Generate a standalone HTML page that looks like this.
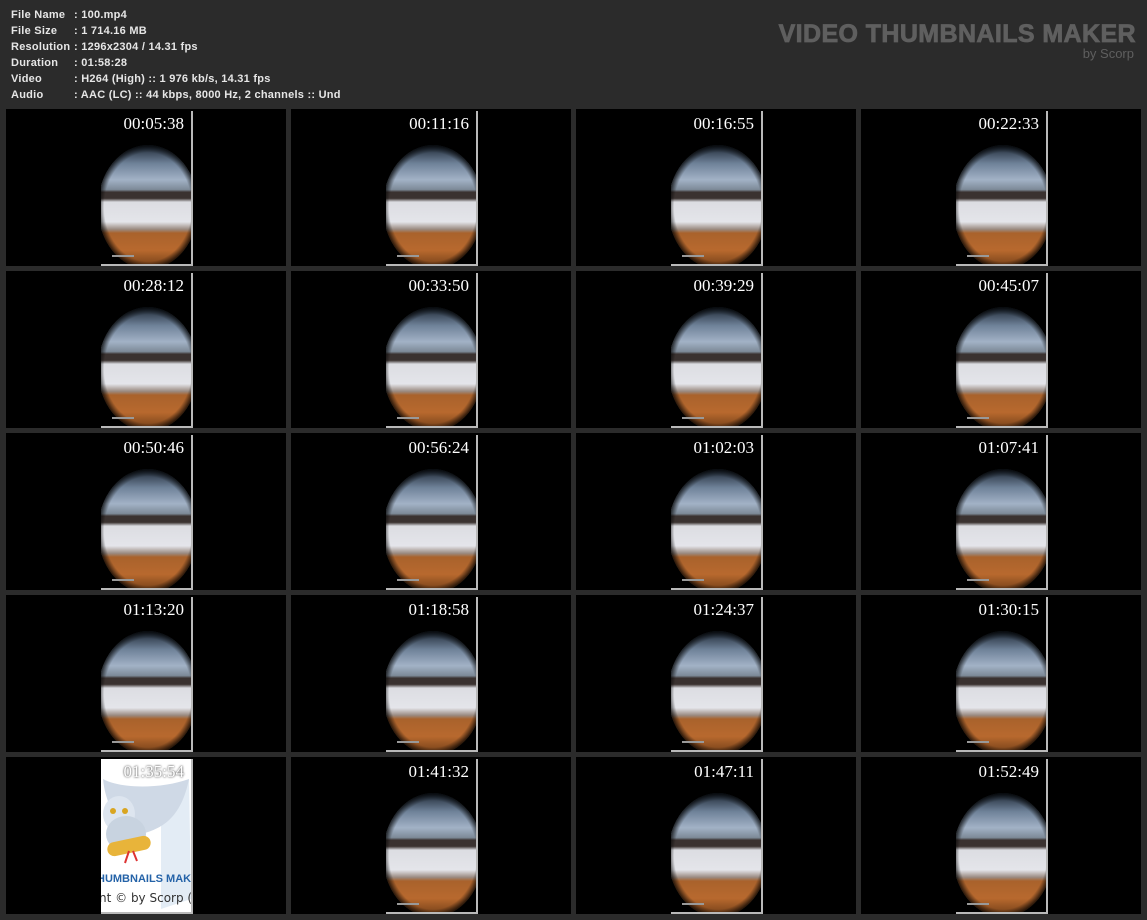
<!DOCTYPE html>
<html><head><meta charset="utf-8"><style>
*{margin:0;padding:0;box-sizing:border-box}
body{width:1147px;height:920px;background:#2b2b2b;position:relative;overflow:hidden;font-family:"Liberation Sans",Arial,sans-serif}
.info{position:absolute;left:11px;top:7px;color:#e6e6e6;font-size:11px;font-weight:bold;line-height:16px;letter-spacing:0.25px}
.info div{white-space:nowrap}
.info span{display:inline-block;width:63px}
.logo{position:absolute;right:11px;top:19px;color:#5f5f5f;font-family:"Liberation Sans",sans-serif;font-weight:bold;font-size:25px;letter-spacing:0.4px;line-height:30px;-webkit-text-stroke:0.8px #5f5f5f}
.by{position:absolute;right:13px;top:46px;color:#5f5f5f;font-family:"Liberation Sans",sans-serif;font-size:13px}
.cell{position:absolute;width:280px;height:157px;background:#000}
.th{position:absolute;left:95px;top:2px;width:92px;height:155px;background:#000;border-right:2px solid #b9b9b9;border-bottom:2px solid #b9b9b9;overflow:hidden}
.sc{position:absolute;left:-3px;top:34px;width:100px;height:124px;border-radius:50%;overflow:hidden;background:linear-gradient(#1a2430 0%,#6f8299 15%,#a2b2c6 28%,#7d8a98 36%,#3a3230 38%,#3a3230 43%,#dcdde2 46%,#e4e5ea 62%,#9a8a80 68%,#a9622c 71%,#b8692e 85%,#6a3a16 100%)}
.vg{position:absolute;left:-3px;top:34px;width:100px;height:124px;border-radius:50%;background:radial-gradient(ellipse at 50% 50%,rgba(0,0,0,0) 62%,rgba(0,0,0,.8) 71%)}
.ts{position:absolute;right:7px;top:3px;color:#fff;font-family:"Liberation Serif","DejaVu Serif",serif;font-size:17px;text-shadow:0 0 2px #000}
.wm{position:absolute;left:11px;top:144px;width:22px;height:2px;background:#999}
.owl{background:#fff}
</style></head><body>
<div class="info">
<div><span>File Name</span>: 100.mp4</div>
<div><span>File Size</span>: 1 714.16 MB</div>
<div><span>Resolution</span>: 1296x2304 / 14.31 fps</div>
<div><span>Duration</span>: 01:58:28</div>
<div><span>Video</span>: H264 (High) :: 1 976 kb/s, 14.31 fps</div>
<div><span>Audio</span>: AAC (LC) :: 44 kbps, 8000 Hz, 2 channels :: Und</div>
</div>
<div class="logo">VIDEO THUMBNAILS MAKER</div>
<div class="by">by Scorp</div>

<div class="cell" style="left:6px;top:109px"><div class="th"><div class="sc"></div><div class="vg"></div><div class="wm"></div><div class="ts">00:05:38</div></div></div>
<div class="cell" style="left:291px;top:109px"><div class="th"><div class="sc"></div><div class="vg"></div><div class="wm"></div><div class="ts">00:11:16</div></div></div>
<div class="cell" style="left:576px;top:109px"><div class="th"><div class="sc"></div><div class="vg"></div><div class="wm"></div><div class="ts">00:16:55</div></div></div>
<div class="cell" style="left:861px;top:109px"><div class="th"><div class="sc"></div><div class="vg"></div><div class="wm"></div><div class="ts">00:22:33</div></div></div>

<div class="cell" style="left:6px;top:271px"><div class="th"><div class="sc"></div><div class="vg"></div><div class="wm"></div><div class="ts">00:28:12</div></div></div>
<div class="cell" style="left:291px;top:271px"><div class="th"><div class="sc"></div><div class="vg"></div><div class="wm"></div><div class="ts">00:33:50</div></div></div>
<div class="cell" style="left:576px;top:271px"><div class="th"><div class="sc"></div><div class="vg"></div><div class="wm"></div><div class="ts">00:39:29</div></div></div>
<div class="cell" style="left:861px;top:271px"><div class="th"><div class="sc"></div><div class="vg"></div><div class="wm"></div><div class="ts">00:45:07</div></div></div>

<div class="cell" style="left:6px;top:433px"><div class="th"><div class="sc"></div><div class="vg"></div><div class="wm"></div><div class="ts">00:50:46</div></div></div>
<div class="cell" style="left:291px;top:433px"><div class="th"><div class="sc"></div><div class="vg"></div><div class="wm"></div><div class="ts">00:56:24</div></div></div>
<div class="cell" style="left:576px;top:433px"><div class="th"><div class="sc"></div><div class="vg"></div><div class="wm"></div><div class="ts">01:02:03</div></div></div>
<div class="cell" style="left:861px;top:433px"><div class="th"><div class="sc"></div><div class="vg"></div><div class="wm"></div><div class="ts">01:07:41</div></div></div>

<div class="cell" style="left:6px;top:595px"><div class="th"><div class="sc"></div><div class="vg"></div><div class="wm"></div><div class="ts">01:13:20</div></div></div>
<div class="cell" style="left:291px;top:595px"><div class="th"><div class="sc"></div><div class="vg"></div><div class="wm"></div><div class="ts">01:18:58</div></div></div>
<div class="cell" style="left:576px;top:595px"><div class="th"><div class="sc"></div><div class="vg"></div><div class="wm"></div><div class="ts">01:24:37</div></div></div>
<div class="cell" style="left:861px;top:595px"><div class="th"><div class="sc"></div><div class="vg"></div><div class="wm"></div><div class="ts">01:30:15</div></div></div>

<div class="cell" style="left:6px;top:757px"><div class="th owl">
<svg width="92" height="155" style="position:absolute;left:0;top:0">
<path d="M60 40 L88 20 L90 140 L60 150 Z" fill="#e3ecf5"/>
<path d="M2 20 C20 30 60 30 88 20 C80 60 60 70 40 75 C20 70 5 50 2 20Z" fill="#cfd9e6"/>
<ellipse cx="18" cy="55" rx="16" ry="18" fill="#dde5ef"/>
<ellipse cx="25" cy="75" rx="20" ry="18" fill="#c8d3e0"/>
<circle cx="12" cy="52" r="3" fill="#d9a520"/><circle cx="24" cy="52" r="3" fill="#d9a520"/>
<rect x="6" y="80" width="44" height="14" rx="7" fill="#e8b43a" transform="rotate(-12 28 87)"/>
<path d="M28 92 l-4 12 M32 92 l4 10" stroke="#d33" stroke-width="2"/>
</svg>
<div style="position:absolute;left:-4px;top:114px;color:#2563a8;font:bold 11px 'Liberation Sans',sans-serif;white-space:nowrap">HUMBNAILS MAKER <span style="color:#9a6ad0">8</span></div>
<div style="position:absolute;left:-2px;top:132px;color:#333;font:12px 'DejaVu Sans',sans-serif;white-space:nowrap">nt © by Scorp (SU</div>
<div class="ts">01:35:54</div></div></div>
<div class="cell" style="left:291px;top:757px"><div class="th"><div class="sc"></div><div class="vg"></div><div class="wm"></div><div class="ts">01:41:32</div></div></div>
<div class="cell" style="left:576px;top:757px"><div class="th"><div class="sc"></div><div class="vg"></div><div class="wm"></div><div class="ts">01:47:11</div></div></div>
<div class="cell" style="left:861px;top:757px"><div class="th"><div class="sc"></div><div class="vg"></div><div class="wm"></div><div class="ts">01:52:49</div></div></div>
</body></html>
